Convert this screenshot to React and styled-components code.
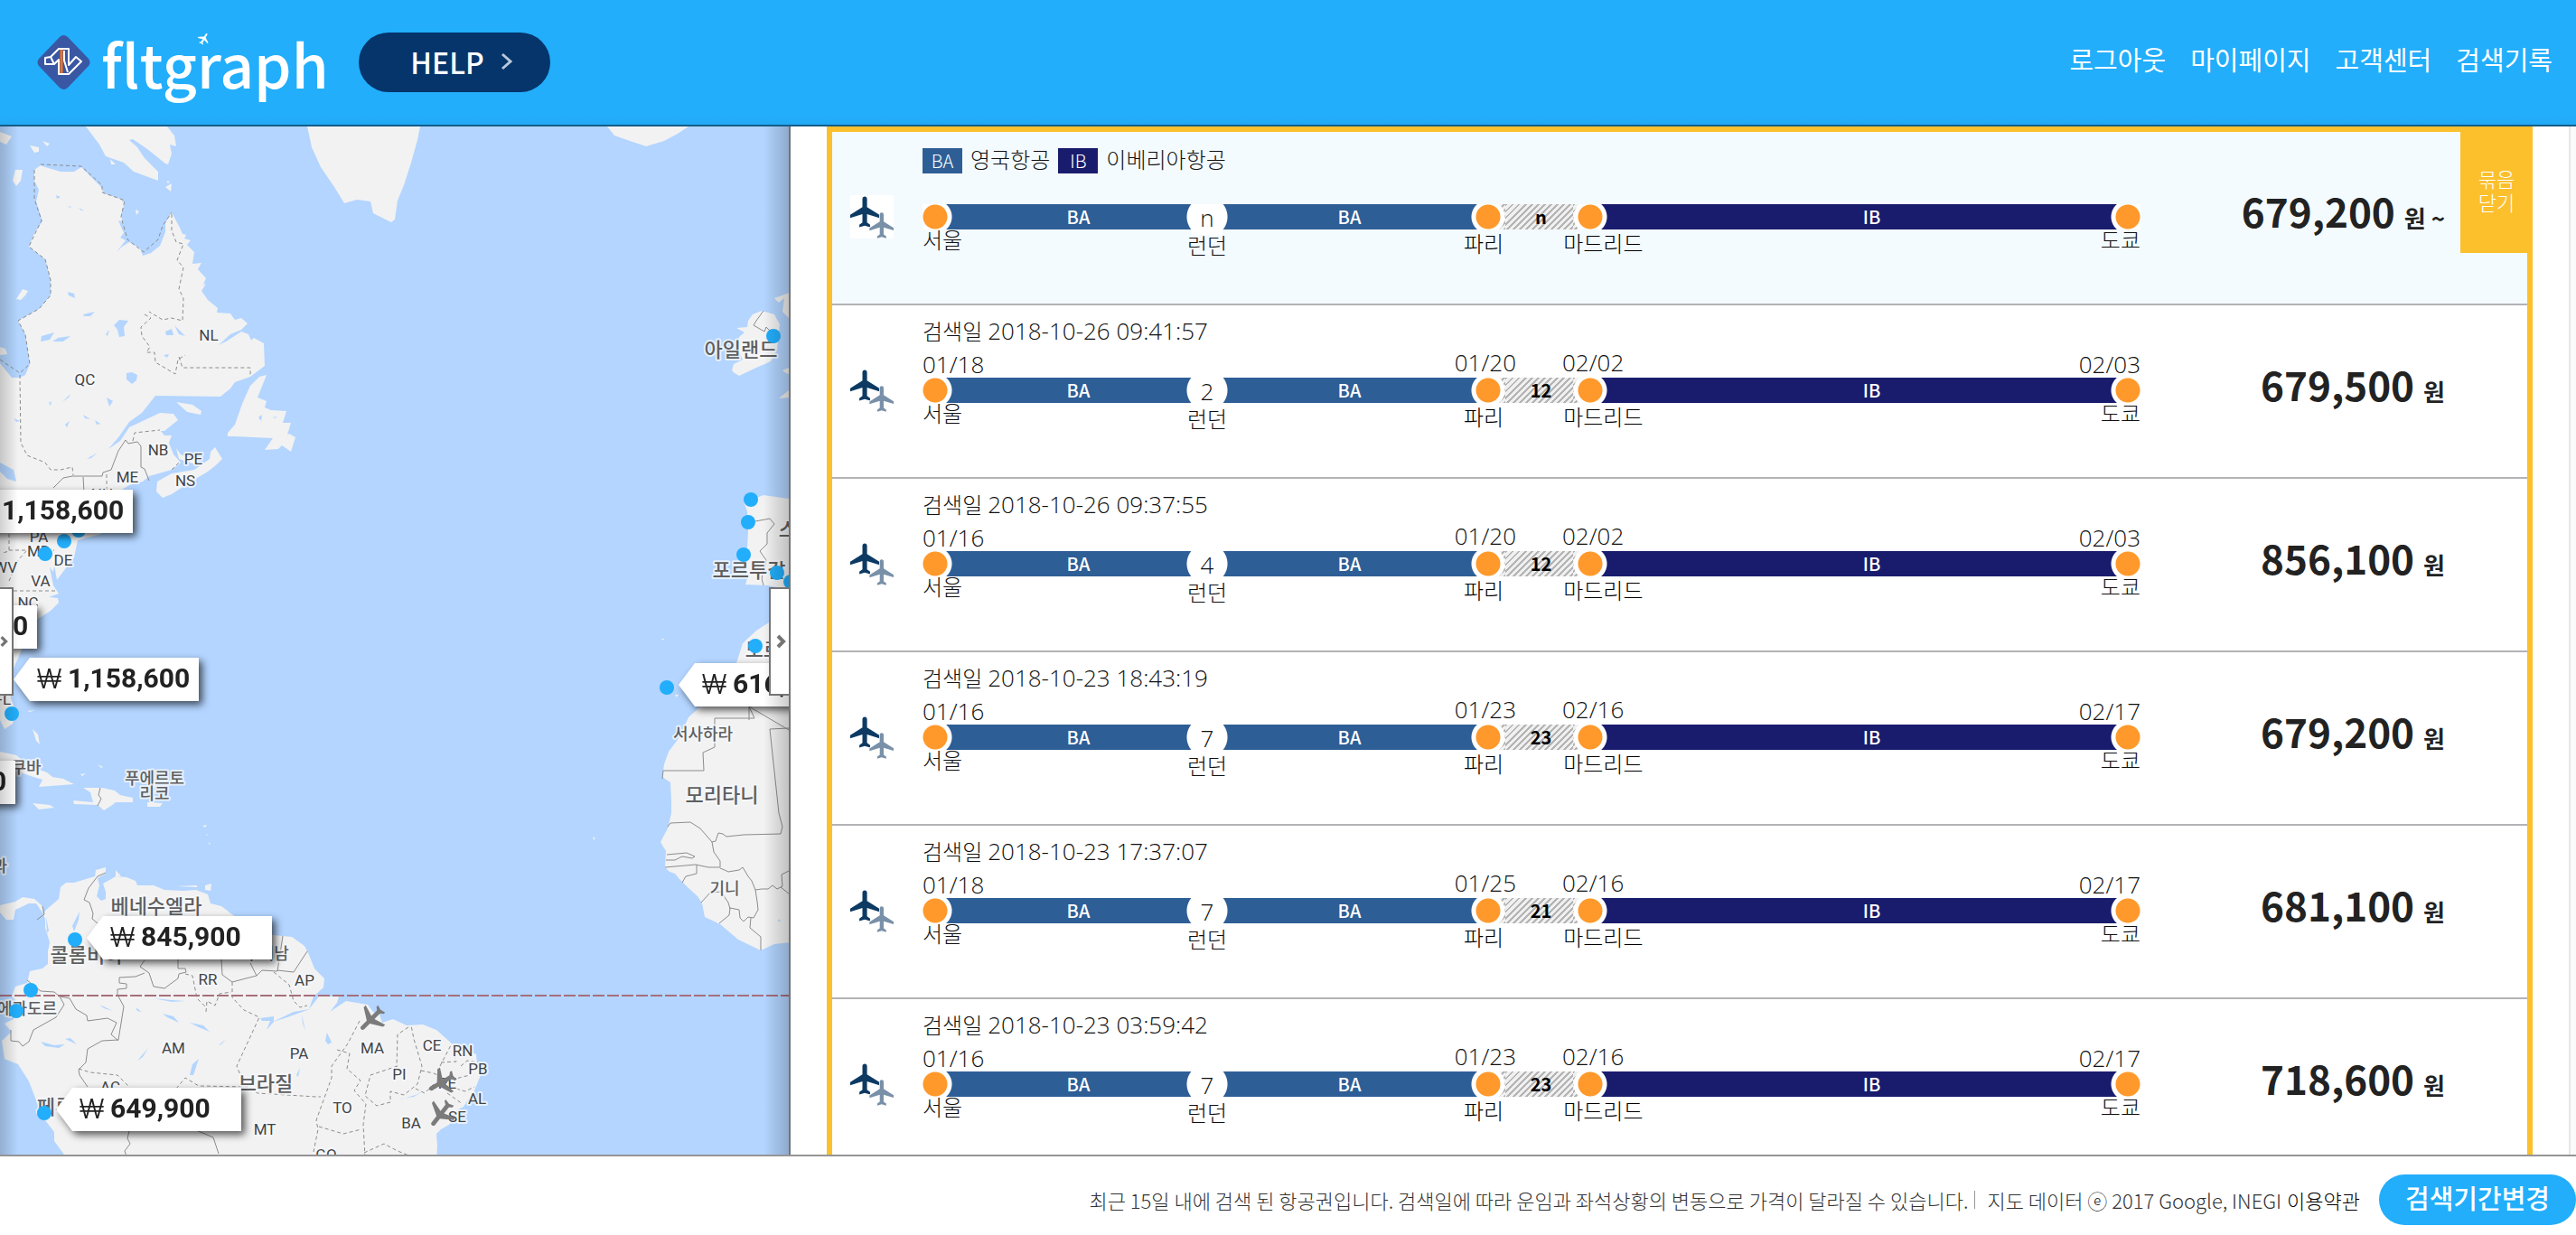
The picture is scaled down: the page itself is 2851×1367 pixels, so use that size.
import React from "react";
import styled, { createGlobalStyle } from "styled-components";

const SANS = `"Noto Sans CJK KR", "Noto Sans", sans-serif`;
const ROBOTO = `Roboto, "Noto Sans CJK KR", sans-serif`;
const DIGITS = `"Open Sans", "Noto Sans CJK KR", sans-serif`;
const BLUE = "#2e5e96";
const NAVY = "#191c6d";
const ORANGE = "#ff992b";
const YELLOW = "#fcc02d";
const HATCH = "repeating-linear-gradient(135deg, #b4b4b4 0 2px, #f0f0f0 2px 5px)";
const FLIGHT =
  "M21 16v-2l-8-5V3.5c0-.83-.67-1.5-1.5-1.5S10 2.67 10 3.5V9l-8 5v2l8-2.5V19l-2 1.5V22l3.5-1 3.5 1v-1.5L13 19v-5.5l8 2.5z";

const Global = createGlobalStyle`
  *, *::before, *::after { box-sizing: border-box; }
  body { margin: 0; font-family: ${SANS}; color: #222; background: #fff; }
  a { color: inherit; text-decoration: none; }
  button { font: inherit; border: 0; padding: 0; cursor: pointer; }
  ul { list-style: none; margin: 0; padding: 0; }
`;

const Page = styled.div`
  display: flex;
  flex-direction: column;
  height: 100vh;
  overflow: hidden;
`;

/* ---------- header ---------- */

const Header = styled.header`
  display: flex;
  align-items: center;
  flex: none;
  height: 140px;
  padding: 0 26px 0 41px;
  border-bottom: 2px solid #145d88;
  background: linear-gradient(#22aefb 0 128px, #22a9f4 138px);
  color: #fff;
`;

const Brand = styled.a`
  position: relative;
  display: flex;
  align-items: center;
  gap: 12px;
  width: 356px;
  height: 132px;
`;

const BrandName = styled.span`
  font-size: 66px;
  line-height: 100px;
  font-weight: 500;
`;

const BrandPlane = styled.svg`
  position: absolute;
  left: 177px;
  top: 32px;
`;

const HelpButton = styled.button`
  display: flex;
  align-items: center;
  justify-content: center;
  gap: 18px;
  width: 212px;
  height: 66px;
  padding: 0 0 2px 16px;
  border-radius: 33px;
  background: #05356b;
  color: #fff;
  font-size: 32px;
  line-height: 48px;
  font-weight: 500;
`;

const Nav = styled.nav`
  display: flex;
  gap: 27px;
  margin-left: auto;
  padding-bottom: 8px;
  font-size: 29px;
  line-height: 44px;
`;

/* ---------- map ---------- */

const Main = styled.main`
  display: grid;
  grid-template-columns: minmax(0, 875fr) minmax(0, 1976fr);
  grid-template-rows: minmax(0, 1fr);
  flex: 1;
  min-height: 0;
`;

const MapPane = styled.section`
  position: relative;
  overflow: hidden;
  border-right: 2px solid #757575;
  background: #b3d5ff;
`;

const MapSvg = styled.svg`
  display: block;
  width: 100%;
  height: 100%;
`;

const EdgeShade = styled.div`
  position: absolute;
  inset: 0;
  pointer-events: none;
  background: linear-gradient(90deg, rgba(0, 0, 0, 0.18), transparent 20px),
    linear-gradient(270deg, rgba(0, 0, 0, 0.2), transparent 28px);
`;

const Pin = styled.button`
  position: absolute;
  left: ${(p) => p.$x}px;
  top: ${(p) => p.$y}px;
  background: none;
  filter: drop-shadow(4px 4px 4px rgba(0, 0, 0, 0.65));
`;

const PinBody = styled.span`
  display: flex;
  gap: 6px;
  width: 205px;
  height: 48px;
  padding-left: 25px;
  background: #fff;
  clip-path: polygon(0 50%, 18px 0, 100% 0, 100% 100%, 18px 100%);
  color: #222;
  font: 700 30px/46px ${ROBOTO};
  white-space: nowrap;
`;

const Won = styled.span`
  width: 29px;
  font: 300 30px/46px Inter, sans-serif;
  text-align: center;
`;

const Handle = styled.button`
  position: absolute;
  top: 510px;
  ${(p) => (p.$side === "left" ? "left: 0;" : "right: -2px;")}
  display: flex;
  align-items: center;
  justify-content: ${(p) => (p.$side === "left" ? "flex-end" : "center")};
  width: ${(p) => (p.$side === "left" ? 15 : 24)}px;
  height: 120px;
  padding-right: ${(p) => (p.$side === "left" ? 4 : 0)}px;
  border: 2px solid #757575;
  ${(p) => (p.$side === "left" ? "border-left: 0;" : "border-right: 0;")}
  background: #fff;
`;

/* ---------- results ---------- */

const Results = styled.section`
  display: flex;
  overflow: hidden;
`;

const Group = styled.ul`
  position: relative;
  flex: 1;
  align-self: flex-start;
  margin: 0 40px;
  border: 6px solid ${YELLOW};
`;

const Gutter = styled.div`
  flex: none;
  width: 8px;
  border-left: 2px solid #e6e6e6;
  background: #fafafa;
`;

const CloseTab = styled.button`
  position: absolute;
  top: -6px;
  right: -6px;
  width: 80px;
  height: 140px;
  background: ${YELLOW};
  color: #fff;
  font-size: 22px;
  line-height: 26px;
  font-weight: 300;
`;

const Row = styled.li`
  display: grid;
  grid-template-columns: 80px minmax(0, 1fr) 337px;
  height: 192px;
  padding: 12px 91px 0 20px;
  border-bottom: 2px solid #b3b3b5;
  background: ${(p) => (p.$summary ? "#f4fbff" : "#fff")};
  color: #111;
  font-size: 24px;
  line-height: 32px;
  font-weight: 300;
`;

const RouteIcon = styled.svg`
  display: block;
  margin-top: 58px;
  background: #fff;
`;

const RowHead = styled.div`
  display: flex;
  gap: 6px;
  height: 36px;
`;

const Digits = styled.span`
  font-family: ${DIGITS};
  font-size: 26px;
`;

const Airlines = styled.div`
  display: flex;
  align-items: flex-end;
  gap: 9px;
  height: 34px;
`;

const Code = styled.span`
  width: 44px;
  height: 28px;
  background: ${(p) => p.$color};
  color: #fff;
  font-size: 20px;
  line-height: 28px;
  text-align: center;
`;

const Line = styled.div`
  display: grid;
  grid-template-columns: 33px 259fr 46px 269fr 151px 557fr 33px;
  grid-template-rows: ${(p) => p.$h}px;
`;

const Cell = styled.div`
  display: flex;
  grid-column: ${(p) => p.$col};
  justify-content: ${(p) => p.$align || "flex-start"};
  gap: ${(p) => p.$gap || 0}px;
  min-width: 0;
  line-height: ${(p) => p.$lh || 34}px;
  white-space: nowrap;
`;

const NameGroup = styled(Cell)`
  margin-left: -8px;
  color: #000;
`;

const Segment = styled.div`
  padding-left: ${(p) => p.$lead || 0}px;
  background: ${(p) => p.$color};
  color: #fff;
  font-size: 20px;
  line-height: 28px;
  font-weight: 500;
  text-align: center;
`;

const Stop = styled.div`
  background: radial-gradient(
      circle at ${(p) => p.$at || "50%"} 50%,
      ${ORANGE} 13px,
      #fff 14px 18px,
      transparent 19px
    ),
    ${(p) => p.$under};
`;

const Layover = styled.div`
  display: flex;
  justify-content: center;
  align-items: flex-start;
  background: radial-gradient(circle at 50% 50%, #fff 22px, ${BLUE} 23px);
`;

const LayoverText = styled(Digits)`
  flex: none;
  width: 34px;
  height: 34px;
  background: #fff;
  line-height: 30px;
  text-align: center;
`;

const Stay = styled.div`
  display: grid;
  grid-template-columns: 38px 1fr 38px;
  grid-template-rows: 28px;
`;

const StayDays = styled.div`
  padding-left: 4px;
  background: ${HATCH};
  color: #000;
  font-size: 20px;
  line-height: 28px;
  font-weight: 700;
  text-align: center;
`;

const Price = styled.div`
  display: flex;
  align-items: baseline;
  justify-content: flex-end;
  gap: 10px;
  padding-top: 43px;
  font-weight: 700;
  line-height: 64px;
  color: #222;
`;

const Amount = styled.strong`
  font-size: 44px;
  font-weight: 700;
`;

const Unit = styled.span`
  font-size: 26px;
`;

/* ---------- footer ---------- */

const Footer = styled.footer`
  display: flex;
  align-items: center;
  justify-content: flex-end;
  flex: none;
  padding: 20px 0 11px;
  border-top: 2px solid #969496;
  font-size: 22px;
  line-height: 32px;
  font-weight: 300;
  color: #333;
`;

const Divider = styled.span`
  width: 1px;
  height: 20px;
  margin: 0 13px 0 7px;
  background: #999;
`;

const Terms = styled.a`
  margin: 0 21px 0 6px;
  color: #000;
`;

const PeriodButton = styled.button`
  width: 218px;
  height: 56px;
  border-radius: 28px;
  background: #22aefb;
  color: #fff;
  font-size: 29px;
  line-height: 48px;
  font-weight: 500;
  padding-bottom: 6px;
`;

/* ---------- map data ---------- */

const LAND = [
  // Quebec, Labrador, the Maritimes and the east coast
  "45,183 50,185 67,190 82,190 90,185 100,195 112,207 115,214 133,220 138,225 134,237 136,246 131,244 137,258 133,263 139,266 129,279 135,273 143,268 155,275 158,283 167,280 177,272 183,257 183,247 190,235 199,252 202,259 206,260 204,264 211,266 207,271 215,279 213,292 223,291 219,298 228,308 225,315 228,314 223,322 230,332 241,341 240,346 255,347 260,354 267,352 274,358 267,365 255,370 242,382 250,378 267,367 275,370 278,377 275,379 281,374 292,380 293,405 277,417 260,423 255,430 244,439 172,438 157,457 143,467 132,483 120,497 133,488 143,473 177,457 192,458 197,465 182,477 178,477 182,482 190,482 187,490 192,503 200,512 190,520 165,527 158,533 143,537 130,545 118,560 128,585 108,592 86,598 82,617 72,630 63,642 60,625 59,633 55,628 59,648 65,657 54,661 64,662 65,667 56,676 42,685 30,705 15,740 10,760 12,773 17,787 14,801 5,807 0,797 -10,790 -10,398 0,402 13,418 22,418 28,415 33,403 28,370 20,355 43,342 56,327 56,310 50,287 32,273 38,258 47,245 40,223 43,210 38,200 38,188",
  // Baffin and smaller islands
  "95,140 110,160 117,173 137,180 148,190 175,200 175,190 160,175 152,163 143,155 147,154 163,165 183,181 186,182 190,170 188,160 195,162 193,150 185,140",
  "0,146 13,151 7,160 0,157", "33,161 43,163 43,168 38,169", "47,156 55,159 52,162",
  "17,188 25,188 23,200 18,206 14,200", "122,176 128,182 123,182", "150,232 154,234 151,238",
  "183,207 190,203 189,212", "184,200 188,201 186,203", "18,331 25,320 31,322 28,327 23,332",
  "0,384 6,386 8,392 0,393",
  // Greenland, Iceland
  "340,140 345,163 355,185 370,207 381,225 395,221 410,223 413,236 433,246 437,243 440,222 447,205 455,180 462,155 465,140",
  "672,140 680,150 700,157 715,162 735,156 750,148 762,140",
  // Anticosti, Newfoundland, Nova Scotia, PEI
  "195,445 213,448 223,455 222,459 207,456",
  "295,415 285,440 295,444 293,451 300,454 317,455 313,468 322,468 318,481 320,480 327,484 322,500 312,493 308,497 293,498 302,485 260,483 252,483 252,479 260,470 268,447 277,427 287,417",
  "238,495 246,508 240,514 230,522 213,532 190,547 180,551 173,544 174,533 190,524 215,520 232,508 233,500",
  "195,496 200,503 210,507 222,507 216,514 198,508",
  // Caribbean
  "-10,830 0,832 18,836 33,848 52,855 58,860 70,862 82,868 43,871 47,863 37,860 17,853 0,842 -10,840",
  "92,872 113,872 127,875 133,880 147,883 147,888 128,888 123,892 115,897 108,891 82,890 81,886 103,888 100,877",
  "36,889 55,891 60,894 43,896", "163,888 180,889 177,893 163,893",
  "36,807 42,813 44,824 40,820", "30,787 39,786 33,788", "108,846 114,849 112,850", "89,857 95,856 91,859",
  "224,914 229,913 227,916", "228,923 230,924 229,925", "230,932 233,934 232,935",
  // South America with Panama
  "-10,1003 0,1002 17,998 25,993 38,995 47,1003 48,1013 50,1008 65,995 67,982 73,977 82,977 95,973 105,970 106,963 117,960 117,967 108,972 110,980 107,992 112,997 117,995 117,987 114,978 123,973 128,970 140,971 150,975 152,980 170,980 182,985 203,986 217,985 230,990 233,1000 245,1003 258,1013 287,1027 302,1035 323,1037 337,1047 342,1057 348,1072 359,1083 358,1093 347,1103 342,1117 353,1103 375,1103 373,1110 365,1120 383,1108 407,1112 413,1120 420,1123 423,1132 435,1128 450,1135 468,1134 483,1140 500,1155 527,1167 528,1177 532,1190 525,1207 513,1225 507,1228 497,1245 488,1250 483,1255 484,1267 483,1290 80,1290 71,1278 60,1263 60,1253 50,1240 42,1223 32,1197 20,1178 5,1172 2,1152 13,1142 5,1133 15,1128 17,1107 13,1103 17,1092 30,1088 33,1075 47,1072 53,1067 53,1053 55,1043 50,1027 50,1017 47,1010 40,1000 32,1000 17,1007 15,1018 7,1018 0,1010 -10,1010",
  "128,963 134,970 128,970", "227,980 234,978 233,986 227,985", "195,981 218,980 218,982",
  // Africa
  "885,660 851,689 837,698 822,712 815,734 800,760 773,784 762,794 752,816 740,832 735,846 733,860 742,866 743,887 743,900 739,917 731,932 737,942 736,960 741,965 747,967 752,973 762,983 772,992 777,1000 780,1015 797,1023 817,1040 842,1052 857,1045 885,1042",
  "747,769 751,769 749,772", "732,707 735,707 734,709", "656,926 659,928 657,930",
  // Iberia
  "840,550 845,548 873,552 885,552 885,655 850,648 825,647 828,637 822,623 827,605 828,587 827,566 823,555",
  // Ireland and Britain
  "815,363 827,362 828,355 833,348 843,344 857,348 863,359 862,369 860,387 853,400 837,407 818,416 813,413 810,410 812,403 822,398 815,384 818,373 824,368",
  "857,330 862,335 868,330 866,345 873,352 885,350 885,320", "866,410 873,407 873,414 870,413", "862,441 868,436 873,432 885,430 885,436 873,440",
];

const LAKES = [
  "62,216 67,218 63,220", "74,228 79,229 78,230", "87,230 93,233 90,233", "75,323 82,325 83,330 76,327",
  "92,348 105,345 100,350 93,350", "46,372 60,368 55,376 45,378", "64,374 78,372 70,378 58,378", "126,360 132,354 142,355 137,362 138,372 132,373 130,365",
  "183,367 190,364 192,371 184,371", "193,360 205,372 198,370", "140,413 146,412 152,415 151,421 146,425 140,420",
  "118,440 125,444 121,450", "69,445 78,436 76,440", "54,446 57,444 56,449", "92,459 100,464 94,463", "105,465 111,469 107,470",
  "72,470 77,466 74,473", "96,508 108,501 101,507", "15,463 22,466 18,467", "0,512 15,520 18,533 8,530 0,522",
  "181,393 187,392 185,396", "286,462 290,459 289,466", "302,462 307,461 304,463", "117,370 121,365 119,372",
  "51,1015 54,1030 52,1033", "80,1025 88,1009 87,1018 82,1031", "45,1153 60,1157 72,1156 65,1160 50,1158", "72,1150 78,1149 85,1156",
  "170,1105 190,1107 205,1108 190,1109", "150,1115 157,1120 152,1119", "110,1112 125,1119 115,1116", "152,1174 164,1160 158,1170",
  "180,1122 192,1125 198,1132 185,1126", "210,1132 225,1135 232,1142 220,1137", "288,1127 303,1125 303,1131 295,1140 299,1130 290,1130",
  "302,1131 325,1120 343,1117 315,1127", "213,1178 220,1172 214,1190 210,1190", "362,1143 367,1154 363,1156 360,1152", "443,1217 460,1212 470,1207 458,1214 445,1216",
  "242,1157 250,1150 245,1156", "334,1123 338,1141 335,1133", "328,1190 332,1182 330,1192", "862,1017 864,1020 861,1020",
];

const BORDERS = [
  "59,540 70,529 80,527 113,527 114,523 123,520 131,499 139,487 142,491 152,489 156,494 156,517 160,519 165,532", "92,528 93,545",
  "111,872 109,880 112,884 108,892",
  "117,966 108,970 98,983 93,996 99,999 103,1011 102,1017 108,1022", "30,1085 45,1097 60,1098 66,1103 77,1105 84,1117 96,1124 97,1130 119,1127 129,1132 123,1145 131,1152",
  "66,1103 71,1112 62,1126 53,1131 37,1140 32,1153 25,1158 21,1153 12,1152 12,1140",
  "160,1063 155,1070 165,1077 170,1092 182,1094 197,1083 198,1078 206,1076 205,1072 197,1072 197,1062",
  "160,1077 150,1081 132,1082 132,1088 140,1089 140,1094 130,1095 130,1101 137,1114 131,1151 113,1152 97,1161 95,1176 87,1184 88,1190 97,1203",
  "245,1062 246,1079 257,1087 272,1083 284,1080 277,1066", "284,1080 290,1074 307,1075 313,1036", "307,1074 325,1076 340,1053",
  "143,1252 141,1260 144,1266 138,1274 140,1280", "217,1251 236,1259 242,1277", "47,1003 49,1012 41,1018",
  "829,797 829,782 835,795 791,795 791,827 778,833 779,853 734,853 733,862",
  "829,782 873,808", "852,807 873,806", "852,807 862,900 866,915 864,923 823,924 804,926 800,923 795,922 792,931 788,932",
  "739,915 742,911 764,910 775,917 788,932 790,943 797,953 797,960 784,960 770,957 736,960", "738,946 760,944 769,948 766,950 755,948 747,952 737,952",
  "771,957 771,967 759,970 755,977", "797,961 802,963 806,965 818,963 822,960 828,970 832,975 836,985 843,984 850,984 855,980 860,984 866,981 865,968 873,964", "836,985 838,998 839,1007 834,1016 828,1015 823,1020 819,1016 818,1007 808,1005 807,1013 796,1022",
  "776,999 786,988 798,987 806,999 808,1006", "831,1016 830,1027 842,1037 842,1052", "864,982 873,989",
  "836,577 852,574 857,580 849,590 849,602 841,610 848,620 843,640 845,648", "845,344 837,355 834,360 846,367 848,362 856,370",
];

const REGIONS = [
  "45,182 90,184 113,205 113,213 133,220 138,222 134,240 141,265 159,279 175,265 180,250 190,235",
  "38,188 38,220 46,244 39,258 32,273 50,287 56,310 56,327 43,342 20,355 28,370 33,403 22,413 0,398",
  "190,237 190,255 195,268 203,270 196,288 203,296 198,320 203,330 202,355 190,352 180,354 165,345", "160,348 167,352 156,362 157,372 166,384 162,390 171,390 172,401 194,414 197,398 205,393", "198,395 202,407 277,407 277,417",
  "22,415 23,490 30,504 50,512 56,520 67,520 80,517 81,526", "147,488 149,479 177,476", "118,525 118,542", "10,591 10,610 3,612", "10,609 60,609", "10,643 20,620 30,609", "15,654 64,654", "190,520 200,510",
  "205,1078 213,1080 218,1105 228,1115", "228,1120 229,1108 238,1113 243,1100 256,1098", "257,1087 257,1104 270,1118 287,1126 262,1180 266,1190", "303,1076 320,1090 325,1108 332,1115 340,1113",
  "87,1183 100,1187 130,1190 142,1202", "195,1205 205,1193 220,1202 275,1203 285,1210 350,1214 355,1214", "398,1130 385,1155 367,1180 367,1193 350,1240 352,1250 347,1275", "373,1162 387,1166 384,1183 399,1196 392,1207 405,1222 402,1245 404,1280",
  "353,1247 380,1255 400,1250", "440,1180 410,1190 404,1213 417,1224 432,1220 432,1208 447,1212 462,1200 467,1180 458,1150 455,1135", "452,1137 440,1145 439,1180", "466,1185 480,1188 495,1195", "487,1180 500,1155", "488,1176 505,1175 502,1165", "510,1180 517,1174 528,1176", "460,1205 470,1210 480,1200", "500,1195 520,1190", "505,1205 515,1208 525,1203", "495,1210 512,1222", "403,1276 425,1266 440,1274 455,1280",
];

const CODES = [
  ["QC", 94, 420], ["NL", 231, 371], ["NB", 175, 498], ["PE", 214, 508], ["ME", 141, 528], ["NS", 205, 532],
  ["NH", 113, 547], ["PA", 43, 594], ["MD", 43, 610], ["DE", 70, 620], ["WV", 6, 628], ["VA", 45, 643], ["NC", 31, 667], ["FL", 3, 774],
  ["RR", 230, 1084], ["AP", 337, 1085], ["AM", 192, 1160], ["PA", 331, 1166], ["MA", 412, 1160], ["AC", 122, 1203],
  ["TO", 379, 1226], ["MT", 293, 1250], ["GO", 361, 1278], ["CE", 478, 1157], ["RN", 512, 1163], ["PI", 442, 1189],
  ["PE", 495, 1199], ["PB", 529, 1183], ["AL", 528, 1216], ["SE", 506, 1236], ["BA", 455, 1243],
];

const COUNTRIES = [
  ["아일랜드", 820, 387, 22], ["스페인", 892, 586, 22], ["포르투갈", 829, 631, 22], ["모로코", 855, 719, 22],
  ["서사하라", 778, 812, 18], ["모리타니", 799, 880, 22], ["기니", 802, 983, 18],
  ["쿠바", 29, 849, 18], ["푸에르토", 171, 861, 18], ["리코", 171, 878, 18], ["니카라과", -25, 958, 18],
  ["베네수엘라", 173, 1003, 22], ["콜롬비아", 96, 1057, 22], ["수리남", 295, 1055, 18], ["에콰도르", 30, 1116, 18],
  ["브라질", 294, 1199, 22], ["페루", 61, 1225, 22],
];

const DOTS = [
  [87, 587], [71, 599], [50, 613], [13, 790], [83, 1040], [34, 1096], [18, 1119], [49, 1232],
  [856, 372], [831, 553], [828, 578], [823, 614], [860, 634], [875, 644], [836, 715], [738, 761],
];

const PLANES = [[411, 1128, 225], [489, 1198, 240], [488, 1233, 218]];

const PINS = [
  { x: -58, y: 402, price: "1,158,600" },
  { x: -164, y: 530, price: "1,158,600" },
  { x: 15, y: 588, price: "1,158,600" },
  { x: -188, y: 702, price: "1,158,600" },
  { x: 751, y: 594, price: "616,500" },
  { x: 96, y: 874, price: "845,900" },
  { x: 62, y: 1064, price: "649,900" },
];

const RESULTS = [
  { layover: "n", stay: "n", price: "679,200", from: true },
  { at: "2018-10-26 09:41:57", dates: ["01/18", "01/20", "02/02", "02/03"], layover: 2, stay: 12, price: "679,500" },
  { at: "2018-10-26 09:37:55", dates: ["01/16", "01/20", "02/02", "02/03"], layover: 4, stay: 12, price: "856,100" },
  { at: "2018-10-23 18:43:19", dates: ["01/16", "01/23", "02/16", "02/17"], layover: 7, stay: 23, price: "679,200" },
  { at: "2018-10-23 17:37:07", dates: ["01/18", "01/25", "02/16", "02/17"], layover: 7, stay: 21, price: "681,100" },
  { at: "2018-10-23 03:59:42", dates: ["01/16", "01/23", "02/16", "02/17"], layover: 7, stay: 23, price: "718,600" },
];

/* ---------- components ---------- */

function Emblem() {
  return (
    <svg width="59" height="60" viewBox="0 0 59 60" aria-hidden="true">
      <path d="M25 2Q29.500-2 34 2L57 26Q60 30 57 34L34 58Q29.500 62 25 58L2 34Q-1 30 2 26Z" fill="#3a57a4" />
      <g fill="none" stroke="#fff" strokeWidth="2" strokeLinejoin="round">
        <path d="M9 25l6-1 9-9h11v18l8-9 6 5-14 14H24V27l-5 5H9z" />
        <path d="M30 17v11l4 13M15 24l4 8" />
      </g>
      <path d="M27 16v26" stroke="#f4731c" strokeWidth="3" />
    </svg>
  );
}

function WorldMap() {
  return (
    <MapSvg viewBox="0 140 873 1138" preserveAspectRatio="xMinYMin slice" role="img" aria-label="지도">
      <g fill="#f2f2f2">{LAND.map((p) => <polygon key={p} points={p} />)}</g>
      <g fill="#b3d5ff">{LAKES.map((p) => <polygon key={p} points={p} />)}</g>
      <g fill="none" stroke="#8c8c8c">
        {BORDERS.map((p) => <polyline key={p} points={p} />)}
        <g strokeDasharray="4 3">{REGIONS.map((p) => <polyline key={p} points={p} />)}</g>
      </g>
      <path d="M0 1102H873" stroke="#a66f7c" strokeWidth="2" strokeDasharray="13 3" />
      <g textAnchor="middle" stroke="#f5f8fc" strokeWidth="4" strokeLinejoin="round" paintOrder="stroke" strokeOpacity="0.8">
        <g fill="#444" fontFamily={ROBOTO} fontSize="17">
          {CODES.map(([t, x, y]) => <text key={t + x} x={x} y={y + 6} paintOrder="stroke">{t}</text>)}
        </g>
        <g fill="#5f5f5f" fontFamily={SANS} fontWeight="500">
          {COUNTRIES.map(([t, x, y, s]) => (
            <text key={t} x={x} y={y + Math.round(s * 0.38)} fontSize={s} paintOrder="stroke">{t}</text>
          ))}
        </g>
      </g>
      <g fill="#22aefb">{DOTS.map(([x, y]) => <circle key={x + "-" + y} cx={x} cy={y} r="8" />)}</g>
      <g fill="#7b7b7b">
        {PLANES.map(([x, y, a]) => (
          <path key={y} d={FLIGHT} transform={`translate(${x} ${y}) rotate(${a}) scale(1.6) translate(-11.5 -12)`} />
        ))}
      </g>
    </MapSvg>
  );
}

function HandleArrow() {
  return (
    <svg width="11" height="16" viewBox="0 0 11 16" aria-hidden="true">
      <path d="M2 2l6 6-6 6" fill="none" stroke="#757575" strokeWidth="4" />
    </svg>
  );
}

function TwinPlanes() {
  return (
    <RouteIcon width="48" height="48" viewBox="0 0 48 48" aria-hidden="true">
      <g transform="translate(-3.500 -2) scale(1.700)"><path d={FLIGHT} fill="#0c3a63" /></g>
      <g transform="translate(18.500 16.500) scale(1.420)">
        <path d={FLIGHT} fill="#7890a8" stroke="#fff" strokeWidth="1" paintOrder="stroke" />
      </g>
    </RouteIcon>
  );
}

function Route({ item }) {
  const d = item.dates || [];
  return (
    <div>
      <RowHead>
        {item.at ? (
          <>
            <span>검색일</span>
            <Digits>{item.at}</Digits>
          </>
        ) : (
          <Airlines>
            <Code $color={BLUE}>BA</Code>
            <span>영국항공</span>
            <Code $color={NAVY}>IB</Code>
            <span>이베리아항공</span>
          </Airlines>
        )}
      </RowHead>
      <Line $h={32}>
        <Cell $col={1}><Digits>{d[0]}</Digits></Cell>
        <Cell $col={5} $align="center" $gap={51} $lh={30}>
          <Digits>{d[1]}</Digits>
          <Digits>{d[2]}</Digits>
        </Cell>
        <Cell $col={7} $align="flex-end"><Digits>{d[3]}</Digits></Cell>
      </Line>
      <Line $h={28}>
        <Stop $at="14px" $under={`linear-gradient(${BLUE}, ${BLUE}) 100% 0 / 50% 100% no-repeat, #fff`} />
        <Segment $color={BLUE} $lead={20}>BA</Segment>
        <Layover><LayoverText>{item.layover}</LayoverText></Layover>
        <Segment $color={BLUE}>BA</Segment>
        <Stay>
          <Stop $under={`linear-gradient(${BLUE}, ${BLUE}) 0 0 / 50% 100% no-repeat, ${HATCH}`} />
          <StayDays>{item.stay}</StayDays>
          <Stop $under={`linear-gradient(${NAVY}, ${NAVY}) 100% 0 / 50% 100% no-repeat, ${HATCH}`} />
        </Stay>
        <Segment $color={NAVY} $lead={28}>IB</Segment>
        <Stop $at="calc(100% - 14px)" $under={`linear-gradient(${NAVY}, ${NAVY}) 0 0 / 50% 100% no-repeat, #fff`} />
      </Line>
      <Line $h={34}>
        <Cell $col={1} $lh={22}>서울</Cell>
        <Cell $col={3} $align="center" $lh={34}>런던</Cell>
        <NameGroup $col={5} $gap={66} $lh={30}>
          <span>파리</span>
          <span>마드리드</span>
        </NameGroup>
        <Cell $col={7} $align="flex-end" $lh={22}>도쿄</Cell>
      </Line>
    </div>
  );
}

export default function App() {
  return (
    <Page>
      <Global />
      <Header>
        <Brand href="#">
          <Emblem />
          <BrandName>fltgraph</BrandName>
          <BrandPlane width="16" height="16" viewBox="0 0 24 24" aria-hidden="true">
            <path d={FLIGHT} fill="#fff" transform="rotate(30 12 12)" />
          </BrandPlane>
        </Brand>
        <HelpButton type="button">
          HELP
          <svg width="14" height="20" viewBox="0 0 14 20" aria-hidden="true">
            <path d="M2 2l9 8-9 8" fill="none" stroke="#b9c8da" strokeWidth="3" />
          </svg>
        </HelpButton>
        <Nav>
          <a href="#">로그아웃</a>
          <a href="#">마이페이지</a>
          <a href="#">고객센터</a>
          <a href="#">검색기록</a>
        </Nav>
      </Header>
      <Main>
        <MapPane>
          <WorldMap />
          {PINS.map((p) => (
            <Pin key={p.x} type="button" $x={p.x} $y={p.y}>
              <PinBody>
                <Won>₩</Won>
                {p.price}
              </PinBody>
            </Pin>
          ))}
          <EdgeShade />
          <Handle type="button" $side="left" aria-label="이전"><HandleArrow /></Handle>
          <Handle type="button" $side="right" aria-label="다음"><HandleArrow /></Handle>
        </MapPane>
        <Results>
          <Group>
            {RESULTS.map((item, i) => (
              <Row key={i} $summary={item.from}>
                <TwinPlanes />
                <Route item={item} />
                <Price>
                  <Amount>{item.price}</Amount>
                  <Unit>원{item.from ? " ~" : ""}</Unit>
                </Price>
              </Row>
            ))}
            <li>
              <CloseTab type="button">묶음<br />닫기</CloseTab>
            </li>
          </Group>
          <Gutter />
        </Results>
      </Main>
      <Footer>
        <span>최근 15일 내에 검색 된 항공권입니다. 검색일에 따라 운임과 좌석상황의 변동으로 가격이 달라질 수 있습니다.</span>
        <Divider />
        <span>지도 데이터 ⓔ 2017 Google, INEGI</span>
        <Terms href="#">이용약관</Terms>
        <PeriodButton type="button">검색기간변경</PeriodButton>
      </Footer>
    </Page>
  );
}
